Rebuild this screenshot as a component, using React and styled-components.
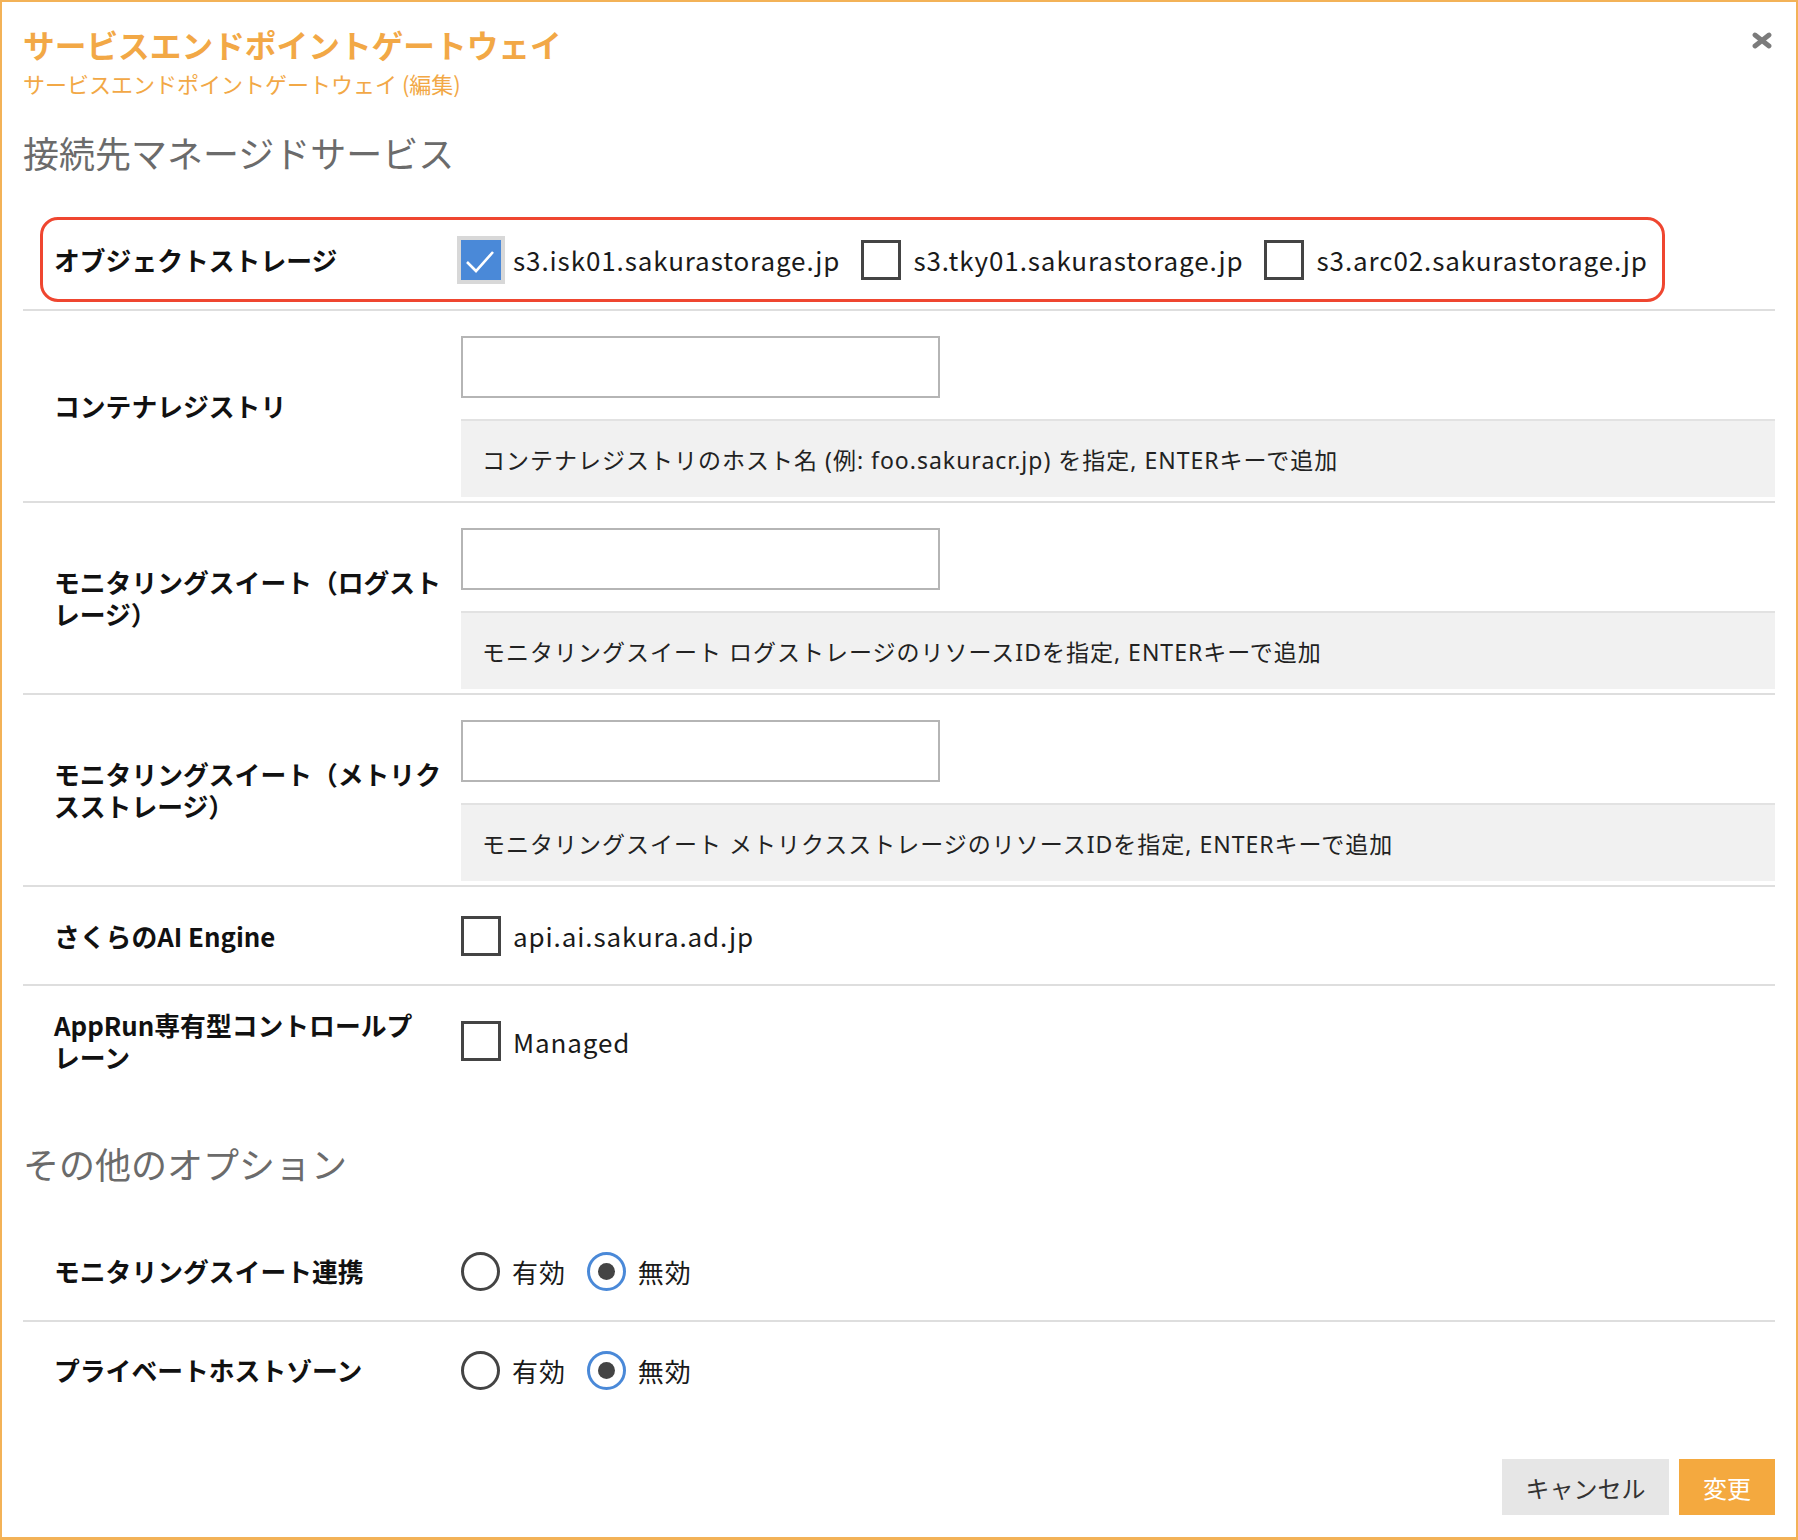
import React from 'react';
import styled, { createGlobalStyle } from 'styled-components';

const GlobalStyle = createGlobalStyle`
  html, body {
    margin: 0;
    padding: 0;
    background: #fff;
  }

  body {
    font-family: "Noto Sans CJK JP", "Noto Sans", sans-serif;
    color: #111;
  }

  * {
    box-sizing: border-box;
  }
`;

const Modal = styled.div`
  width: 1798px;
  height: 1540px;
  border: 2px solid #f3b257;
  border-bottom-width: 3px;
  padding: 0 21px;
  display: flex;
  flex-direction: column;
  background: #fff;
`;

const Header = styled.header`
  display: flex;
  justify-content: space-between;
  align-items: flex-start;
  padding-top: 22px;
`;

const Title = styled.h1`
  margin: 0;
  font-size: 31.7px;
  line-height: 40px;
  font-weight: 700;
  color: #f2a846;
`;

const Subtitle = styled.p`
  margin: 5px 0 0;
  font-size: 22px;
  line-height: 28px;
  color: #f2a846;
`;

const CloseButton = styled.button`
  border: none;
  background: none;
  padding: 0;
  margin: 8px 3px 0 0;
  width: 20px;
  height: 17px;
  cursor: pointer;
  display: flex;
`;

const SectionHeading = styled.h2`
  margin: ${({ $top }) => $top}px 0 0;
  font-size: 36px;
  line-height: 48px;
  font-weight: 400;
  color: #6b6b6b;
`;

const Row = styled.div`
  display: grid;
  grid-template-columns: 407px 1fr;
  align-items: center;
  padding-left: 31px;
  min-height: ${({ $height }) => ($height ? `${$height}px` : 'auto')};
  border-bottom: ${({ $last }) => ($last ? 'none' : '2px solid #dedede')};
  margin-top: ${({ $top }) => $top || 0}px;
`;

const HighlightRow = styled.div`
  margin-top: 41px;
  padding-bottom: 7px;
  border-bottom: 2px solid #dedede;
`;

const Highlight = styled.div`
  display: grid;
  grid-template-columns: 407px auto;
  align-items: center;
  width: fit-content;
  height: 85px;
  margin-left: 17px;
  padding: 0 14px 0 11px;
  border: 3px solid #ef4630;
  border-radius: 18px;
`;

const Label = styled.div`
  max-width: 390px;
  font-size: 25.8px;
  line-height: 32px;
  font-weight: 700;
  color: #111;
  white-space: pre-line;
`;

const Options = styled.div`
  display: flex;
  align-items: center;
  gap: 21px;
`;

const Option = styled.label`
  display: flex;
  align-items: center;
  gap: 12px;
  font-size: 26px;
  letter-spacing: 0.9px;
  color: #1a1a1a;
  white-space: nowrap;
`;

const Box = styled.span`
  width: 40px;
  height: 40px;
  display: flex;
  align-items: center;
  justify-content: center;
  background: ${({ $checked }) => ($checked ? '#4a89d8' : '#fff')};
  border: ${({ $checked }) => ($checked ? 'none' : '3px solid #444')};
  box-shadow: ${({ $checked }) => ($checked ? '0 0 0 4px #d8d8d8' : 'none')};
`;

const Radio = styled.span`
  width: 39px;
  height: 39px;
  border-radius: 50%;
  border: 3px solid ${({ $checked }) => ($checked ? '#4a89d8' : '#444')};
  display: flex;
  align-items: center;
  justify-content: center;

  &::after {
    content: '';
    display: ${({ $checked }) => ($checked ? 'block' : 'none')};
    width: 17px;
    height: 17px;
    border-radius: 50%;
    background: #444;
  }
`;

const FieldStack = styled.div`
  display: flex;
  flex-direction: column;
  gap: 21px;
  padding: 25px 0 4px;
`;

const TextInput = styled.input`
  width: 479px;
  height: 62px;
  border: 2px solid #b5b5b5;
  border-radius: 0;
  padding: 0 12px;
  font-size: 22px;
  outline: none;
`;

const Help = styled.div`
  height: 78px;
  display: flex;
  align-items: center;
  padding-left: 21px;
  background: #f1f1f1;
  border-top: 2px solid #e2e2e2;
  font-family: "Noto Sans", "Noto Sans CJK JP", sans-serif;
  font-size: 23px;
  letter-spacing: 1px;
  color: #222;
`;

const Footer = styled.footer`
  display: flex;
  justify-content: flex-end;
  gap: 10px;
  margin-top: 41px;
`;

const Button = styled.button`
  height: 56px;
  padding: 0 ${({ $primary }) => ($primary ? '20px' : '22px')};
  min-width: ${({ $primary }) => ($primary ? '96px' : '167px')};
  border: none;
  border-radius: 0;
  font-family: inherit;
  font-size: 24px;
  background: ${({ $primary }) => ($primary ? '#f4a93f' : '#e6e6e6')};
  color: ${({ $primary }) => ($primary ? '#fff' : '#333')};
  cursor: pointer;
`;

function Checkbox({ checked, children }) {
  return (
    <Option>
      <Box $checked={checked}>
        {checked && (
          <svg width="40" height="40" viewBox="0 0 40 40">
            <polyline points="6,22 15,31 32,12" fill="none" stroke="#fff" strokeWidth="2.6" />
          </svg>
        )}
      </Box>
      {children}
    </Option>
  );
}

function RadioOption({ checked, children }) {
  return (
    <Option>
      <Radio $checked={checked} />
      {children}
    </Option>
  );
}

function InputField({ label, help }) {
  return (
    <Row>
      <Label>{label}</Label>
      <FieldStack>
        <TextInput type="text" />
        <Help>{help}</Help>
      </FieldStack>
    </Row>
  );
}

export default function App() {
  return (
    <>
      <GlobalStyle />
      <Modal>
        <Header>
          <div>
            <Title>サービスエンドポイントゲートウェイ</Title>
            <Subtitle>サービスエンドポイントゲートウェイ (編集)</Subtitle>
          </div>
          <CloseButton aria-label="close">
            <svg width="20" height="17" viewBox="0 0 20 17">
              <path d="M3 3 L17 14 M17 3 L3 14" stroke="#7b7b7b" strokeWidth="4.8" strokeLinecap="round" />
            </svg>
          </CloseButton>
        </Header>

        <SectionHeading $top={31}>接続先マネージドサービス</SectionHeading>

        <HighlightRow>
          <Highlight>
            <Label>オブジェクトストレージ</Label>
            <Options>
              <Checkbox checked>s3.isk01.sakurastorage.jp</Checkbox>
              <Checkbox>s3.tky01.sakurastorage.jp</Checkbox>
              <Checkbox>s3.arc02.sakurastorage.jp</Checkbox>
            </Options>
          </Highlight>
        </HighlightRow>

        <InputField
          label="コンテナレジストリ"
          help="コンテナレジストリのホスト名 (例: foo.sakuracr.jp) を指定, ENTERキーで追加"
        />
        <InputField
          label="モニタリングスイート（ログストレージ）"
          help="モニタリングスイート ログストレージのリソースIDを指定, ENTERキーで追加"
        />
        <InputField
          label="モニタリングスイート（メトリクスストレージ）"
          help="モニタリングスイート メトリクスストレージのリソースIDを指定, ENTERキーで追加"
        />

        <Row $height={99}>
          <Label>さくらのAI Engine</Label>
          <Options>
            <Checkbox>api.ai.sakura.ad.jp</Checkbox>
          </Options>
        </Row>
        <Row $height={110} $last>
          <Label>{'AppRun専有型コントロールプ\nレーン'}</Label>
          <Options>
            <Checkbox>Managed</Checkbox>
          </Options>
        </Row>

        <SectionHeading $top={43}>その他のオプション</SectionHeading>

        <Row $height={100} $top={35}>
          <Label>モニタリングスイート連携</Label>
          <Options>
            <RadioOption>有効</RadioOption>
            <RadioOption checked>無効</RadioOption>
          </Options>
        </Row>
        <Row $height={96} $last>
          <Label>プライベートホストゾーン</Label>
          <Options>
            <RadioOption>有効</RadioOption>
            <RadioOption checked>無効</RadioOption>
          </Options>
        </Row>

        <Footer>
          <Button>キャンセル</Button>
          <Button $primary>変更</Button>
        </Footer>
      </Modal>
    </>
  );
}
